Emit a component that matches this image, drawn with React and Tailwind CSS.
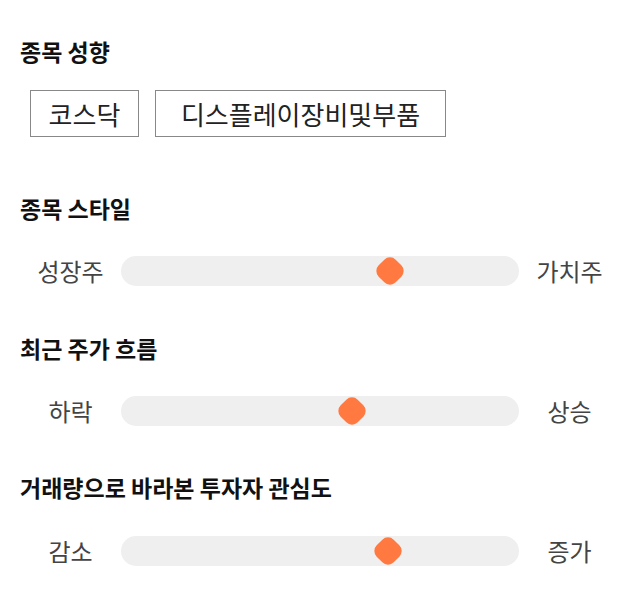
import React from "react";

const font = { fontFamily: '"Noto Sans CJK KR", "Noto Sans", sans-serif' };

function Title({ children, className = "" }) {
  return (
    <div className={"h-8 leading-8 text-[23px] font-bold text-[#111] " + className}>
      {children}
    </div>
  );
}

function Slider({ left, right, pos, className = "" }) {
  return (
    <div className={"flex items-center h-[30px] " + className}>
      <div className="w-[101px] text-center text-[24px] leading-[30px] text-[#444]">{left}</div>
      <div className="relative flex-1 h-[30px] rounded-full bg-[#efefef]">
        <div
          className="absolute top-[1px] w-[28px] h-[28px] flex items-center justify-center"
          style={{ left: pos - 14 }}
        >
          <div className="w-[24px] h-[24px] shrink-0 rotate-45 rounded-[8px] bg-[#ff7940]" />
        </div>
      </div>
      <div className="w-[101px] text-center text-[24px] leading-[30px] text-[#444]">{right}</div>
    </div>
  );
}

export default function App() {
  return (
    <div className="w-[640px] h-[606px] bg-white px-5 pt-[35px]" style={font}>
      <Title>종목 성향</Title>
      <div className="flex gap-4 ml-[10px] mt-[23px]">
        <div className="h-[47px] w-[109px] flex items-center justify-center border border-[#888] text-[26px] text-[#222]">
          코스닥
        </div>
        <div className="h-[47px] w-[291px] flex items-center justify-center border border-[#888] text-[26px] text-[#222]">
          디스플레이장비및부품
        </div>
      </div>
      <Title className="mt-[55px]">종목 스타일</Title>
      <Slider className="mt-[32px]" left="성장주" right="가치주" pos={269} />
      <Title className="mt-[46px]">최근 주가 흐름</Title>
      <Slider className="mt-[32px]" left="하락" right="상승" pos={231} />
      <Title className="mt-[45px]">거래량으로 바라본 투자자 관심도</Title>
      <Slider className="mt-[33px]" left="감소" right="증가" pos={267} />
    </div>
  );
}
